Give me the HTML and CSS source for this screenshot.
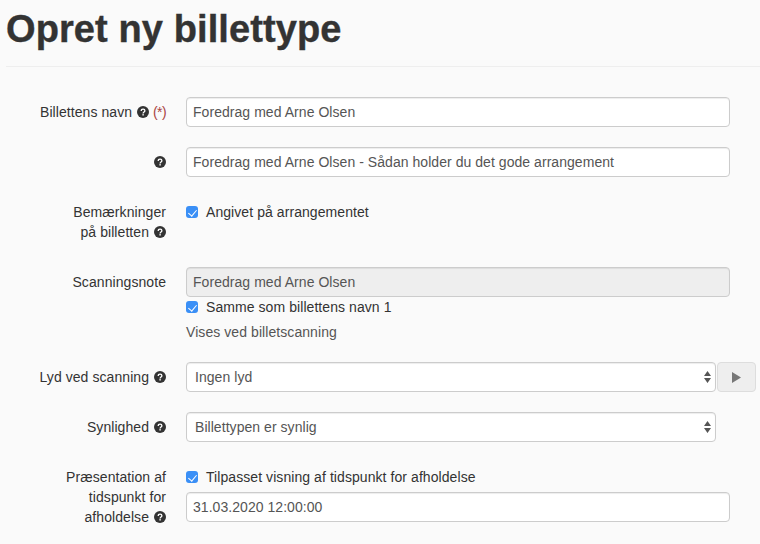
FILE: index.html
```html
<!DOCTYPE html>
<html lang="da">
<head>
    <meta charset="UTF-8">
    <meta name="viewport" content="width=device-width, initial-scale=1.0">
    <title>Opret ny billettype</title>
    <link rel="stylesheet" href="styles.css">
</head>
<body>
    <svg class="sprite" aria-hidden="true">
        <symbol id="help" viewBox="0 0 12 12">
            <circle cx="6" cy="6" r="6" fill="#333"/>
            <path d="M4.200 4.900C4.200 3.800 5 3.100 6.100 3.100S7.900 3.800 7.900 4.700C7.900 6 6.100 6 6.100 7.400" fill="none" stroke="#fff" stroke-width="1.300"/>
            <rect x="5.400" y="8.100" width="1.400" height="1.400" fill="#fff"/>
        </symbol>
        <symbol id="updown" viewBox="0 0 7 12">
            <path d="M3.500 0L7 5H0zM3.500 12L0 7h7z"/>
        </symbol>
    </svg>

    <header class="page-header">
        <h1>Opret ny billettype</h1>
    </header>

    <form class="ticket-form">
        <div class="form-row">
            <label class="form-label">Billettens navn <svg class="help"><use href="#help"/></svg> <span class="required">(*)</span></label>
            <div class="form-field">
                <input class="form-control" type="text" value="Foredrag med Arne Olsen">
            </div>
        </div>

        <div class="form-row">
            <label class="form-label"><svg class="help"><use href="#help"/></svg></label>
            <div class="form-field">
                <input class="form-control" type="text" value="Foredrag med Arne Olsen - Sådan holder du det gode arrangement">
            </div>
        </div>

        <div class="form-row">
            <label class="form-label">Bemærkninger<br>på billetten <svg class="help"><use href="#help"/></svg></label>
            <div class="form-field pad-top">
                <label class="check"><input type="checkbox" checked> Angivet på arrangementet</label>
            </div>
        </div>

        <div class="form-row">
            <label class="form-label">Scanningsnote</label>
            <div class="form-field">
                <input class="form-control" type="text" value="Foredrag med Arne Olsen" disabled>
                <label class="check"><input type="checkbox" checked> Samme som billettens navn 1</label>
                <p class="help-text">Vises ved billetscanning</p>
            </div>
        </div>

        <div class="form-row">
            <label class="form-label">Lyd ved scanning <svg class="help"><use href="#help"/></svg></label>
            <div class="form-field select-row">
                <div class="select-wrap">
                    <select class="form-control">
                        <option>Ingen lyd</option>
                    </select>
                    <svg class="updown"><use href="#updown"/></svg>
                </div>
                <button class="play" type="button" aria-label="Afspil">
                    <svg viewBox="0 0 9 11" width="9" height="11"><path d="M0 0l9 5.500L0 11z"/></svg>
                </button>
            </div>
        </div>

        <div class="form-row">
            <label class="form-label">Synlighed <svg class="help"><use href="#help"/></svg></label>
            <div class="form-field select-row">
                <div class="select-wrap">
                    <select class="form-control">
                        <option>Billettypen er synlig</option>
                    </select>
                    <svg class="updown"><use href="#updown"/></svg>
                </div>
            </div>
        </div>

        <div class="form-row">
            <label class="form-label">Præsentation af<br>tidspunkt for<br>afholdelse <svg class="help"><use href="#help"/></svg></label>
            <div class="form-field pad-top">
                <label class="check"><input type="checkbox" checked> Tilpasset visning af tidspunkt for afholdelse</label>
                <input class="form-control date-input" type="text" value="31.03.2020 12:00:00">
            </div>
        </div>
    </form>
</body>
</html>
```

FILE: styles.css
```css
* {
    box-sizing: border-box;
}
body {
    margin: 0;
    height: 544px;
    overflow: hidden;
    background-color: #fafafa;
    color: #333;
    font-family: "Liberation Sans", Arial, sans-serif;
    font-size: 14px;
    line-height: 20px;
    letter-spacing: .07px;
}
.sprite {
    display: none;
}
.page-header {
    margin-left: 6px;
    height: 67px;
    padding-top: 9px;
    border-bottom: 1px solid #eee;
}
h1 {
    margin: 0;
    font-size: 38px;
    line-height: 40px;
    font-weight: bold;
    letter-spacing: .1px;
    -webkit-text-stroke: .4px #333;
}
.ticket-form {
    display: flex;
    flex-direction: column;
    gap: 20px;
    padding: 30px 0 0 6px;
}
.form-row {
    display: grid;
    grid-template-columns: 160px 570px;
    column-gap: 20px;
}
.form-label {
    padding: 5px 0;
    text-align: right;
}
.help {
    width: 12px;
    height: 12px;
    margin-left: 1px;
    vertical-align: -1px;
}
.required {
    color: #a94442;
    letter-spacing: -.6px;
}
.form-field {
    min-width: 0;
}
.pad-top {
    padding-top: 5px;
}
.form-control {
    display: block;
    width: 544px;
    height: 30px;
    padding: 4px 6px;
    background-color: #fff;
    border: 1px solid #ccc;
    border-radius: 4px;
    box-shadow: inset 0 1px 1px rgba(0, 0, 0, .075);
    color: #555;
    font-family: inherit;
    font-size: 14px;
    line-height: 20px;
    letter-spacing: .05px;
}
.form-control:disabled {
    background-color: #eee;
    opacity: 1;
}
select.form-control {
    width: 530px;
    padding-left: 8px;
    appearance: none;
}
.check {
    display: flex;
    align-items: center;
    gap: 8px;
    height: 20px;
}
/* macOS-like checkbox */
.check input {
    position: relative;
    width: 12px;
    height: 12px;
    margin: 0;
    appearance: none;
    background-color: #3a8ff6;
    border-radius: 3px;
}
.check input::after {
    content: "";
    position: absolute;
    left: 4px;
    top: 1.500px;
    width: 4px;
    height: 7px;
    border: solid #fff;
    border-width: 0 1.500px 1.500px 0;
    transform: rotate(40deg);
}
.help-text {
    margin: 5px 0 0;
    color: #555;
}
.date-input {
    margin-top: 5px;
}
.select-row {
    display: flex;
    gap: 1px;
}
.select-wrap {
    position: relative;
}
.updown {
    position: absolute;
    top: 9px;
    right: 5px;
    width: 7px;
    height: 12px;
    fill: #555;
    pointer-events: none;
}
.play {
    display: flex;
    align-items: center;
    justify-content: center;
    width: 39px;
    height: 30px;
    padding: 0;
    background-color: #eee;
    border: 1px solid #ddd;
    border-radius: 4px;
    fill: #777;
}
```
